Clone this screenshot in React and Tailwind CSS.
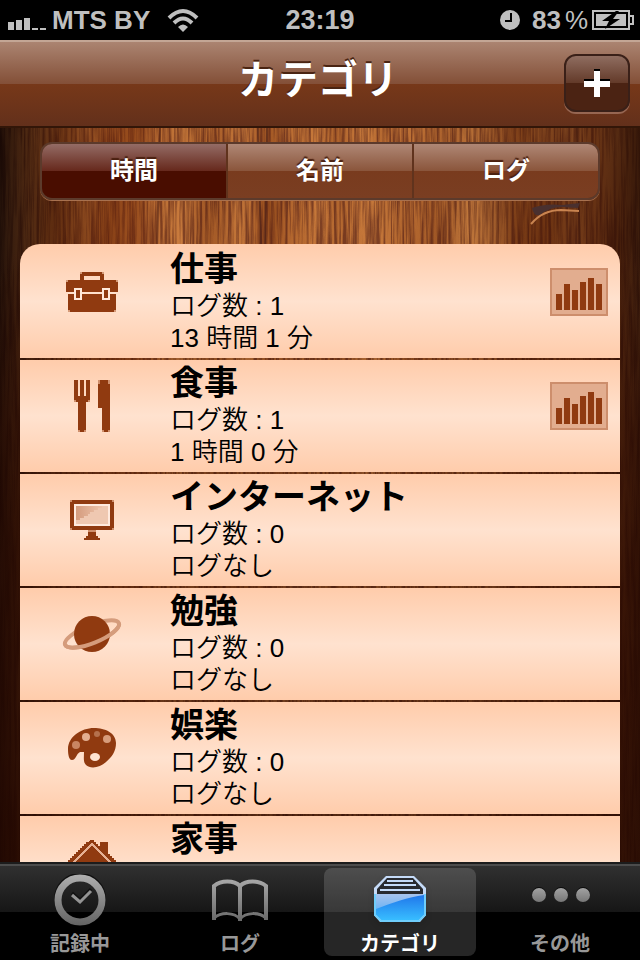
import { useState } from "react";
import clsx from "clsx";

const categories = [
  { name: "仕事", count: 1, total: "13 時間 1 分", icon: BriefcaseIcon },
  { name: "食事", count: 1, total: "1 時間 0 分", icon: CutleryIcon },
  { name: "インターネット", count: 0, total: "ログなし", icon: MonitorIcon },
  { name: "勉強", count: 0, total: "ログなし", icon: PlanetIcon },
  { name: "娯楽", count: 0, total: "ログなし", icon: PaletteIcon },
  { name: "家事", icon: HouseIcon },
];

const segments = ["時間", "名前", "ログ"];

const tabs = [
  { label: "記録中", icon: ClockTabIcon },
  { label: "ログ", icon: BookTabIcon },
  { label: "カテゴリ", icon: DrawerTabIcon },
  { label: "その他", icon: MoreTabIcon },
];

function BriefcaseIcon() {
  return (
    <svg width="52" height="40" viewBox="0 0 26 20" shapeRendering="crispEdges" fill="#903a10">
      <path d="M8 0h10v1h1v3h-2V2H9v2H7V1h1z" />
      <path d="M0 4h26v6H0zM1 11h24v9H1z" />
      <path d="M1 10h24v1H1z" fill="#ffe0cc" />
      <path d="M4 8h4v6H4zM18 8h4v6h-4z" fill="#ffe9db" />
      <path d="M5 9h2v4H5zM19 9h2v4h-2z" />
      <path d="M0 4h1v1H0zM25 4h1v1h-1zM1 19h1v1H1zM24 19h1v1h-1zM7 0h1v1H7zM18 0h1v1h-1z" fill="#d59a78" />
    </svg>
  );
}

function CutleryIcon() {
  return (
    <svg width="36" height="52" viewBox="0 0 18 26" shapeRendering="crispEdges" fill="#903a10">
      <path d="M0 0h2v8h1V0h2v8h1V0h2v10H7v1H6v15H2V11H1v-1H0z" />
      <path d="M13 0h4v1h1v25h-4V14h-2V1h1z" />
      <path d="M0 10h1v1H0zM7 10h1v1H7zM2 25h1v1H2zM5 25h1v1H5zM12 0h1v2h-1zM17 0h1v2h-1zM14 25h1v1h-1zM17 25h1v1h-1z" fill="#cf8f6c" />
    </svg>
  );
}

function MonitorIcon() {
  return (
    <svg width="44" height="40" viewBox="0 0 22 20" shapeRendering="crispEdges" fill="#903a10">
      <defs>
        <linearGradient id="glass" x1="0" y1="0" x2="1" y2="0">
          <stop offset="0" stopColor="#d49b7d" />
          <stop offset="1" stopColor="#eec4ab" />
        </linearGradient>
      </defs>
      <path d="M0 0h22v15H0z" />
      <path d="M2 2h18v11H2z" fill="#ffeade" />
      <path d="M3 3h16v9H3z" fill="#efc8b1" />
      <path d="M3 3h13v1h-2v1h-2v1h-2v1H9v1H7v1H5v1H3z" fill="url(#glass)" />
      <path d="M9 16h4v2h1v1h1v1H7v-1h1v-1h1z" />
      <path d="M0 0h1v1H0zM21 0h1v1h-1zM0 14h1v1H0zM21 14h1v1h-1zM9 15h4v1H9z" fill="#cf8f6c" />
    </svg>
  );
}

function PlanetIcon() {
  return (
    <svg width="60" height="36" viewBox="0 0 60 36">
      <ellipse cx="30" cy="18" rx="29" ry="9" transform="rotate(-22 30 18)" fill="none" stroke="#d59c7c" strokeWidth="4" />
      <circle cx="30" cy="18" r="18" fill="#903a10" />
      <path d="M1 18a29 9 0 0 0 58 0" transform="rotate(-22 30 18)" fill="none" stroke="#d59c7c" strokeWidth="4" />
    </svg>
  );
}

function PaletteIcon() {
  return (
    <svg width="48" height="40" viewBox="0 0 48 40">
      <path
        fill="#903a10"
        d="M26 0C37 0 48 5 48 15c0 8-4 14-10 19-6 6-16 7-20 3-3-3-2-7-2-13h-4c-4 2-4 8-8 8-3 0-4-5-4-11C0 9 13 0 26 0z"
      />
      <circle cx="18" cy="9" r="4" fill="#e3ae90" />
      <circle cx="29" cy="6" r="3" fill="#b5714d" />
      <circle cx="39" cy="11" r="4" fill="#d79c7b" />
      <circle cx="8" cy="17" r="4" fill="#c98663" />
      <ellipse cx="27" cy="29" rx="5" ry="4" fill="#ffe3d1" />
    </svg>
  );
}

function HouseIcon() {
  return (
    <svg width="52" height="44" viewBox="0 0 26 22" shapeRendering="crispEdges" fill="#903a10">
      <path d="M12 0h2v1h1v1h1v1h1V1h4v6h1v1h1v1h1v1h1v1h1v2h-3v9H3v-9H0v-2h1v-1h1V9h1V8h1V7h1V6h1V5h1V4h1V3h1V2h1V1h1z" />
      <path d="M3 12L13 2l10 10" fill="none" stroke="#e5b093" strokeWidth="1" />
    </svg>
  );
}

function ChartIcon() {
  return (
    <svg width="58" height="48" viewBox="0 0 58 48" shapeRendering="crispEdges">
      <path d="M1 1h56v46H1z" fill="#e2ad8f" stroke="#cd8e6c" strokeWidth="2" />
      <path d="M6 26h6v16H6zM14 16h6v26h-6zM22 22h6v20h-6zM30 14h6v28h-6zM38 10h6v32h-6zM46 16h6v26h-6z" fill="#903a10" />
    </svg>
  );
}

function ClockTabIcon() {
  return (
    <svg width="52" height="52" viewBox="0 0 52 52" fill="none">
      <defs>
        <linearGradient id="metal" gradientUnits="userSpaceOnUse" x1="0" y1="0" x2="0" y2="52">
          <stop offset="0" stopColor="#b0b0b0" />
          <stop offset="1" stopColor="#626262" />
        </linearGradient>
      </defs>
      <circle cx="26" cy="25" r="23" stroke="#101010" strokeWidth="6" />
      <circle cx="26" cy="26" r="22" stroke="url(#metal)" strokeWidth="7" />
      <path d="M18 19l8 7 11-11" stroke="#101010" strokeWidth="3" />
      <path d="M18 21l8 7 11-11" stroke="#949494" strokeWidth="3" />
    </svg>
  );
}

function BookTabIcon() {
  return (
    <svg width="56" height="52" viewBox="0 0 56 52" fill="none">
      <g stroke="url(#metal)" strokeWidth="4">
        <path d="M2 46V12c7-6 20-6 26 0 6-6 19-6 26 0v34" />
        <path d="M2 44c7-6 20-6 26 1 6-7 19-7 26-1" strokeWidth="3" />
        <path d="M26 12h4v35h-4z" fill="url(#metal)" stroke="none" />
      </g>
    </svg>
  );
}

function DrawerTabIcon() {
  return (
    <svg width="52" height="52" viewBox="0 0 52 52" className="drop-shadow-md">
      <defs>
        <linearGradient id="drawer" x1="0" y1="0" x2="0" y2="1">
          <stop offset="0" stopColor="#1f74ea" />
          <stop offset="1" stopColor="#38bdff" />
        </linearGradient>
        <linearGradient id="gloss" x1="0" y1="0" x2="0" y2="1">
          <stop offset="0" stopColor="#a8c4ee" />
          <stop offset="1" stopColor="#6fb4f3" />
        </linearGradient>
      </defs>
      <path d="M12 2h28l12 12v27l-6 7H6l-6-7V14z" fill="#c5dbf8" />
      <path d="M13 4h26l10 11v5H3v-5z" fill="#292b30" />
      <path d="M13 7h26M10 11h32M6 16h40" stroke="#c5dbf8" strokeWidth="2" />
      <path d="M2 20h48v21l-5 5H7l-5-5z" fill="url(#drawer)" />
      <path d="M2 20h48v1C34 23 18 29 2 35z" fill="url(#gloss)" />
      <path d="M1 20v21l6 6h38l6-6V20" fill="none" stroke="#6fcdfb" strokeWidth="2" />
    </svg>
  );
}

function MoreTabIcon() {
  return (
    <svg width="60" height="52" viewBox="0 0 60 52">
      <defs>
        <linearGradient id="dot" x1="0" y1="0" x2="0" y2="1">
          <stop offset="0" stopColor="#a2a2a2" />
          <stop offset="1" stopColor="#777" />
        </linearGradient>
      </defs>
      {[9, 31, 53].map((x) => (
        <g key={x}>
          <circle cx={x} cy="20" r="7" fill="#0b0b0b" />
          <circle cx={x} cy="21" r="7" fill="url(#dot)" />
        </g>
      ))}
    </svg>
  );
}

function WoodBackground() {
  return (
    <svg className="absolute inset-0 w-full h-full" aria-hidden="true">
      <defs>
        {/* broad planks */}
        <filter id="planks" x="0" y="0" width="100%" height="100%" colorInterpolationFilters="sRGB">
          <feTurbulence type="fractalNoise" baseFrequency="0.02 0.003" numOctaves="2" seed="4" />
          <feColorMatrix values="0.5 0 0 0 0.5  0.45 0 0 0 0.22  0.3 0 0 0 0.06  0 0 0 0 1" />
        </filter>
        {/* fine fibres */}
        <filter id="grain" x="0" y="0" width="100%" height="100%" colorInterpolationFilters="sRGB">
          <feTurbulence type="fractalNoise" baseFrequency="0.35 0.012" numOctaves="4" seed="8" />
          <feColorMatrix values="0 0 0 0 0.27  0 0 0 0 0.08  0 0 0 0 0.07  3 0 0 0 -1.1" />
        </filter>
        <linearGradient id="edges" x1="0" y1="0" x2="1" y2="0">
          <stop offset="0" stopColor="#0c0201" stopOpacity="0.88" />
          <stop offset="0.06" stopColor="#200800" stopOpacity="0.65" />
          <stop offset="0.2" stopColor="#6a2000" stopOpacity="0.3" />
          <stop offset="0.4" stopColor="#401400" stopOpacity="0" />
          <stop offset="0.65" stopColor="#401400" stopOpacity="0.05" />
          <stop offset="0.93" stopColor="#300c00" stopOpacity="0.6" />
          <stop offset="1" stopColor="#180500" stopOpacity="0.8" />
        </linearGradient>
        <linearGradient id="depth" x1="0" y1="0" x2="0" y2="1">
          <stop offset="0.16" stopColor="#2c0900" stopOpacity="0" />
          <stop offset="0.4" stopColor="#2c0900" stopOpacity="0.35" />
          <stop offset="1" stopColor="#240700" stopOpacity="0.7" />
        </linearGradient>
      </defs>
      <rect width="100%" height="100%" filter="url(#planks)" />
      <rect width="100%" height="100%" filter="url(#grain)" opacity="0.55" />
      <path d="M258 0l3 120M267 0l-2 120M160 0l-3 120M577 0l3 120" stroke="#4a2018" strokeWidth="2" opacity="0.6" />
      <rect width="100%" height="100%" fill="url(#edges)" />
      <rect width="100%" height="100%" fill="url(#depth)" />
      <path d="M532 80q2 9 8 7 10-8 22-8l16 1 2-5-18 2q-16-2-30 3z" fill="#49302f" />
      <path d="M531 96q12-14 30-14l18 1" fill="none" stroke="#c98450" strokeWidth="2" />
    </svg>
  );
}

function StatusBar() {
  return (
    <div className="grid grid-cols-[1fr_auto_1fr] items-center h-10 px-2 bg-black text-[#bfbfbf] text-[26px] leading-10 font-bold">
      <div className="flex items-center gap-1.5">
        <svg width="38" height="20" viewBox="0 0 38 20" fill="currentColor" shapeRendering="crispEdges">
          <path d="M0 12h6v8H0zM8 10h6v10H8zM16 8h6v12h-6zM24 18h6v2h-6zM32 18h6v2h-6z" />
        </svg>
        <span className="whitespace-nowrap">MTS BY</span>
        <svg className="ml-2.5" width="34" height="24" viewBox="0 0 34 24" fill="none" stroke="currentColor" strokeWidth="4">
          <path d="M3 10Q17-4 31 10" />
          <path d="M8 15q9-9 18 0" />
          <path d="M12 19q5-5 10 0l-5 5z" fill="currentColor" stroke="none" />
        </svg>
      </div>
      <span className="text-[27px]">23:19</span>
      <div className="flex items-center justify-end -mr-0.5">
        <svg width="20" height="20" viewBox="0 0 20 20">
          <circle cx="10" cy="10" r="10" fill="currentColor" />
          <path d="M11 3v8H5" fill="none" stroke="#000" strokeWidth="2" />
        </svg>
        <span className="ml-3">83</span>
        <span className="ml-1 mr-1 font-normal">%</span>
        <svg width="42" height="20" viewBox="0 0 42 20">
          <path d="M1 1h36v18H1z" fill="none" stroke="currentColor" strokeWidth="2" />
          <path d="M38 6h3v8h-3" fill="none" stroke="currentColor" strokeWidth="2" />
          <path d="M4 4h30v12H4z" fill="currentColor" />
          <path d="M24 1L10 11h7l-4 8 15-10h-7l6-8z" fill="#000" />
        </svg>
      </div>
    </div>
  );
}

function NavBar() {
  return (
    <header className="grid grid-cols-[1fr_auto_1fr] h-22 px-2.5 border-t-2 border-t-[#c3a695] border-b-2 border-b-[#321608] bg-[linear-gradient(#ab8471,#834f37_50%,#773819_50%,#63301b)]">
      <h1 className="col-start-2 pt-1 pr-1 text-[40px] leading-17 font-bold text-white text-shadow-[0_-2px_0_#4a2412]">
        カテゴリ
      </h1>
      <button
        aria-label="追加"
        className="flex items-center justify-center justify-self-end w-[66px] h-[58px] mt-3 rounded-xl border-2 border-[#3a2018] bg-[linear-gradient(#8f6d60,#633a29_50%,#4b2313_50%,#4b2313)] shadow-[0_2px_0_#966652]"
      >
        <svg width="26" height="28" viewBox="0 0 26 28" shapeRendering="crispEdges">
          <path d="M10 0h6v10h10v6H16v10h-6V16H0v-6h10z" fill="#000" />
          <path d="M10 2h6v10h10v6H16v10h-6V18H0v-6h10z" fill="#fff" />
        </svg>
      </button>
    </header>
  );
}

function SegmentedControl({ selected, onSelect }) {
  return (
    <div className="flex mx-10 mt-3.5 h-[58px] rounded-xl border-2 border-[#5c3a2b] overflow-hidden shadow-[0_1px_0_#a8714f]">
      {segments.map((label, i) => (
        <button
          key={label}
          onClick={() => onSelect(i)}
          className={clsx(
            "flex-1 text-2xl font-bold text-white text-shadow-[0_-2px_1px_#4a2010]",
            i > 0 && "border-l-2 border-[#60331d]",
            selected === i
              ? "bg-[linear-gradient(#946c65,#66281c_50%,#490d00_50%,#490d00)]"
              : "bg-[linear-gradient(#af8775,#8a553b_50%,#793b1e_50%,#7a3e22)]"
          )}
        >
          {label}
        </button>
      ))}
    </div>
  );
}

function CategoryRow({ category }) {
  const Icon = category.icon;
  const hasStats = category.count !== undefined;

  return (
    <li className="flex items-start h-28 first:h-[114px] first:pt-0.5 shrink-0 bg-linear-to-b from-[#ffccab] via-[#ffe2cf] to-[#ffccab]">
      <div className="flex items-center justify-center w-36 h-23 shrink-0">
        <Icon />
      </div>
      <div className="flex-1 pl-1.5 pt-[3px] text-black">
        <h2 className="text-[34px] leading-10 font-bold">{category.name}</h2>
        {hasStats && (
          <div className="pt-px text-[26px] leading-8 font-[350]">
            <p>ログ数 : {category.count}</p>
            <p>{category.total}</p>
          </div>
        )}
      </div>
      {category.count > 0 && (
        <button aria-label="グラフ" className="flex items-center h-23 mr-3">
          <ChartIcon />
        </button>
      )}
    </li>
  );
}

function TabBar({ selected, onSelect }) {
  return (
    <nav className="relative flex h-[98px] shrink-0 border-t-2 border-[#1c1c1c] bg-[linear-gradient(#4c4c4c_2px,#303030_2px,#161616_48px,#000_48px)] pt-1 pb-1">
      {tabs.map(({ label, icon: Icon }, i) => (
        <div key={label} className="flex flex-1 px-1">
          <button
            onClick={() => onSelect(i)}
            className={clsx(
              "flex flex-col flex-1 items-center justify-between pt-1.5 rounded-lg",
              selected === i ? "bg-white/15 text-white" : "text-[#989898]"
            )}
          >
            <Icon />
            <span className="text-xl leading-6 font-bold">{label}</span>
          </button>
        </div>
      ))}
    </nav>
  );
}

export default function App() {
  const [segment, setSegment] = useState(0);
  const [tab, setTab] = useState(2);

  return (
    <div className="flex flex-col h-screen overflow-hidden font-['Liberation_Sans','Noto_Sans_CJK_JP',sans-serif]">
      <StatusBar />
      <NavBar />
      <main className="relative flex-1 min-h-0 overflow-hidden">
        <WoodBackground />
        <div className="relative">
          <SegmentedControl selected={segment} onSelect={setSegment} />
          <ul className="flex flex-col gap-0.5 mx-5 mt-11 rounded-t-[20px] overflow-hidden">
            {categories.map((category) => (
              <CategoryRow key={category.name} category={category} />
            ))}
          </ul>
        </div>
      </main>
      <TabBar selected={tab} onSelect={setTab} />
    </div>
  );
}
